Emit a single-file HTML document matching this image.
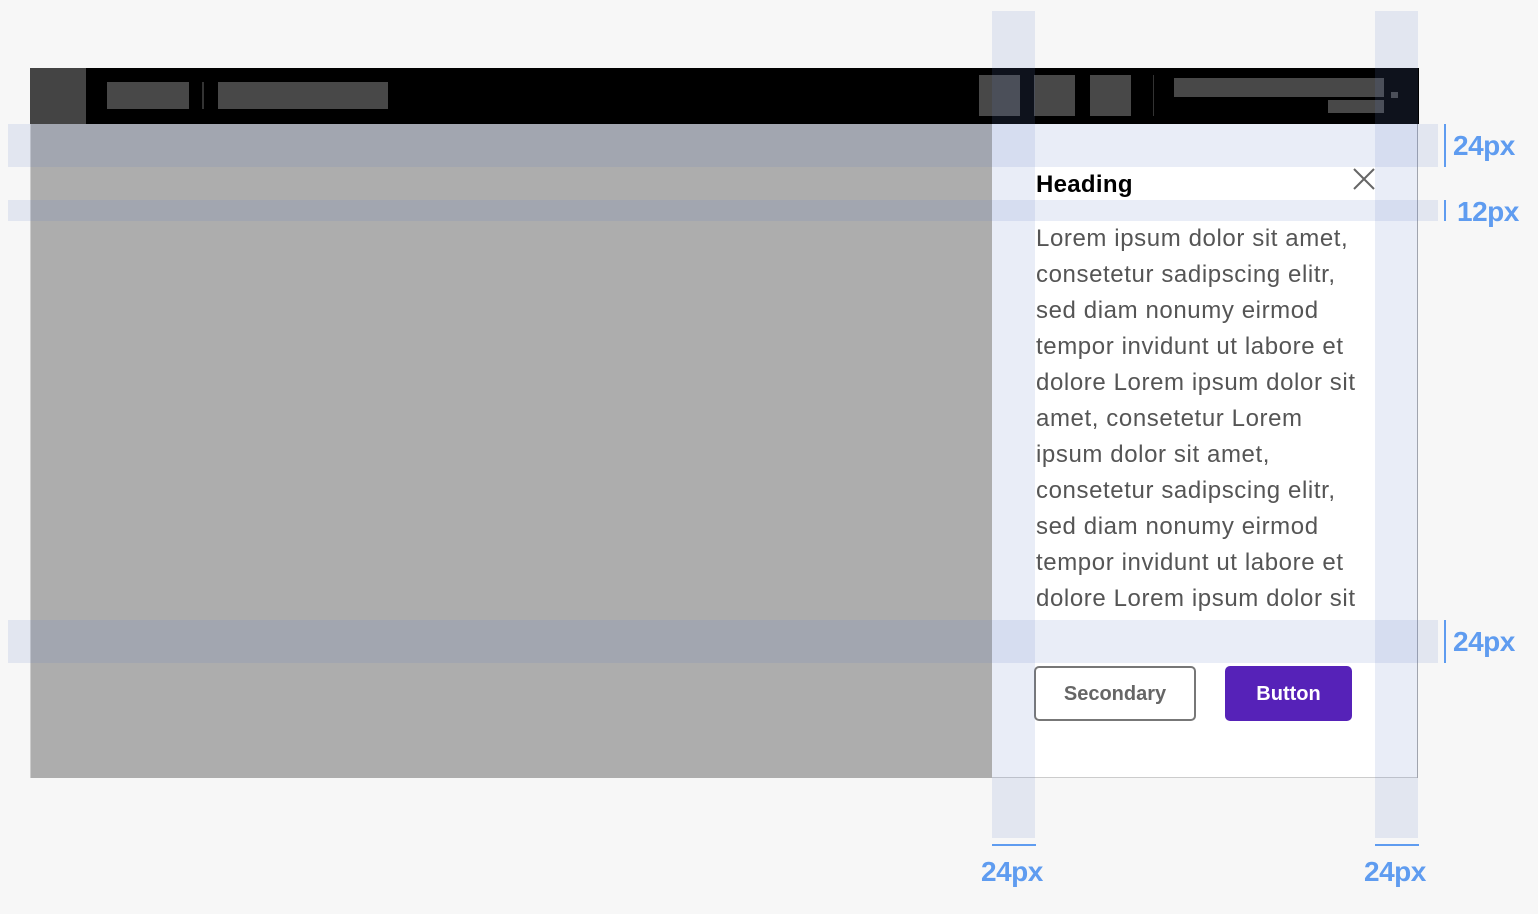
<!DOCTYPE html>
<html><head><style>
body{margin:0;width:1538px;height:914px;background:#f7f7f7;position:relative;overflow:hidden;font-family:"Liberation Sans",sans-serif}
div{position:absolute}
.s{background:rgba(100,130,200,0.14)}
.lb{color:#5f9cf0;font-weight:bold;font-size:28px;letter-spacing:-0.5px}
.bl{background:#5f9cf0}
</style></head><body>
<div style="left:30px;top:68px;width:1388px;height:710px;border:1px solid #ccc;box-sizing:border-box;background:#fff"></div>
<div style="left:30px;top:68px;width:1389px;height:56px;background:#000"></div>
<div style="left:30px;top:68px;width:56px;height:56px;background:#444"></div>
<div style="left:107px;top:82px;width:82px;height:27px;background:#484848"></div>
<div style="left:202px;top:82px;width:2px;height:27px;background:#333"></div>
<div style="left:218px;top:82px;width:170px;height:27px;background:#484848"></div>
<div style="left:979px;top:75px;width:41px;height:41px;background:#484848"></div>
<div style="left:1034px;top:75px;width:41px;height:41px;background:#484848"></div>
<div style="left:1090px;top:75px;width:41px;height:41px;background:#484848"></div>
<div style="left:1153px;top:75px;width:1px;height:41px;background:#333"></div>
<div style="left:1174px;top:78px;width:210px;height:19px;background:#484848"></div>
<div style="left:1328px;top:100px;width:56px;height:13px;background:#484848"></div>
<div style="left:1391px;top:92px;width:7px;height:6px;background:#484848"></div>
<div style="left:31px;top:124px;width:961px;height:654px;background:#adadad"></div>
<div style="left:1417px;top:124px;width:1px;height:654px;background:#aaa"></div>
<div style="left:1036px;top:169px;font-size:24px;font-weight:bold;color:#000;line-height:32px;letter-spacing:0.3px">Heading</div>
<svg style="position:absolute;left:1353px;top:168px" width="22" height="22"><path d="M1 1L21 21M21 1L1 21" stroke="#666" stroke-width="2"/></svg>
<div style="left:1036px;top:221px;font-size:24px;line-height:36px;color:#555;white-space:nowrap;letter-spacing:0.6px">Lorem ipsum dolor sit amet,<br>consetetur sadipscing elitr,<br>sed diam nonumy eirmod<br>tempor invidunt ut labore et<br>dolore Lorem ipsum dolor sit<br>amet, consetetur Lorem<br>ipsum dolor sit amet,<br>consetetur sadipscing elitr,<br>sed diam nonumy eirmod<br>tempor invidunt ut labore et<br>dolore Lorem ipsum dolor sit</div>
<div style="left:1034px;top:666px;width:162px;height:55px;border:2px solid #777;border-radius:5px;box-sizing:border-box;color:#666;font-size:20px;font-weight:bold;text-align:center;line-height:53px;background:#fff">Secondary</div>
<div style="left:1225px;top:666px;width:127px;height:55px;border-radius:5px;background:#5622b8;color:#fff;font-size:20px;font-weight:bold;text-align:center;line-height:57px">Button</div>
<div class="s" style="left:992px;top:11px;width:43px;height:827px"></div>
<div class="s" style="left:1375px;top:11px;width:43px;height:827px"></div>
<div class="s" style="left:8px;top:124px;width:1430px;height:43px"></div>
<div class="s" style="left:8px;top:200px;width:1430px;height:21px"></div>
<div class="s" style="left:8px;top:620px;width:1430px;height:43px"></div>
<div class="bl" style="left:1444px;top:124px;width:2px;height:43px"></div>
<div class="bl" style="left:1444px;top:200px;width:2px;height:21px"></div>
<div class="bl" style="left:1444px;top:620px;width:2px;height:43px"></div>
<div class="bl" style="left:992px;top:844px;width:44px;height:2px"></div>
<div class="bl" style="left:1375px;top:844px;width:44px;height:2px"></div>
<div class="lb" style="left:1453px;top:130px">24px</div>
<div class="lb" style="left:1457px;top:196px">12px</div>
<div class="lb" style="left:1453px;top:626px">24px</div>
<div class="lb" style="left:981px;top:856px">24px</div>
<div class="lb" style="left:1364px;top:856px">24px</div>
</body></html>
